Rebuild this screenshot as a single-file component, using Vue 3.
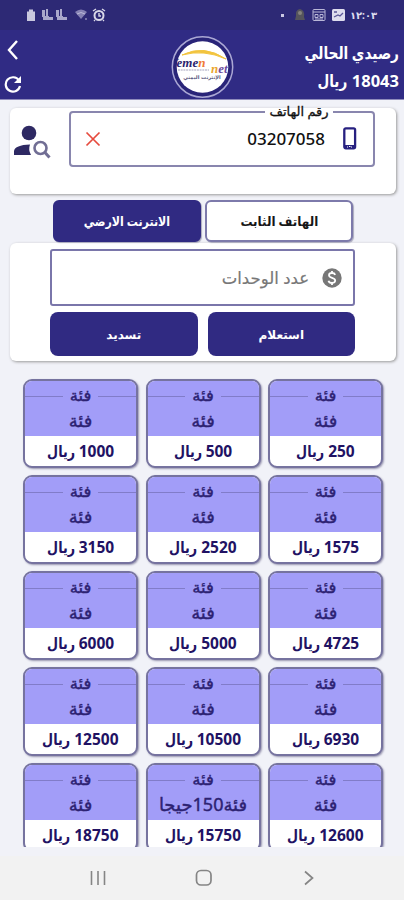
<template>
  <div class="phone" dir="rtl">
    <header class="top">
      <div class="status" dir="ltr">
        <div class="status-left">
          <svg width="10" height="14" viewBox="0 0 10 14"><path d="M3 1.500h4v2h2v9.500H1V3.500h2z" fill="#c9c8de" /></svg>
          <svg class="signals" width="28" height="14" viewBox="0 0 28 14" fill="#a9a7cb">
            <path d="M1 2h3v7H1zM5 1h2v8H5zM2 8h6v4H2zM8 9h4v3H8zM15 2h3v7h-3zM19 1h2v8h-2zM16 8h6v4h-6zM22 9h4v3h-4z" />
          </svg>
          <svg class="wifi" width="15" height="12" viewBox="0 0 15 12"><path d="M1 3q6-5 12 0L7 10z" fill="#8582b4" /><path d="M3 5q4-3 8 0M11 10h2" stroke="#bbb9d8" fill="none" /></svg>
          <svg class="alarm" width="14" height="14" viewBox="0 0 14 14" fill="none" stroke="#d8d7e8">
            <circle cx="7" cy="7.500" r="4.500" stroke-width="2" /><path d="M1 3l3-2M13 3l-3-2M7 5v3h2M3 12l-1 1M11 12l1 1" stroke-width="1.400" />
          </svg>
        </div>
        <div class="status-right">
          <i class="dot"></i>
          <svg width="12" height="14" viewBox="0 0 12 14"><path d="M6 1q5 1 4 8l1 3H1l1-4Q1 2 6 1z" fill="#55545c" /><circle cx="6" cy="5" r="2" fill="#85827c" /></svg>
          <svg width="14" height="14" viewBox="0 0 14 14" fill="none" stroke="#b9b7d7"><rect x="1" y="1.500" width="12" height="11" rx="1" /><path d="M1 4h12M3 6.500h3v3H3zM8 6.500h3v3H8zM3 11h8" /></svg>
          <svg width="13" height="12" viewBox="0 0 13 12"><rect width="13" height="12" rx="1.500" fill="#dedded" /><path d="M2 3h3M2 8l4-2 2 1 3-3" stroke="#5b5797" stroke-width="1.300" fill="none" /></svg>
          <span class="clock">١٢:٠٣</span>
        </div>
      </div>
      <div class="bar">
        <div class="balance">
          <div class="balance-title">رصيدي الحالي</div>
          <div class="balance-value">18043 <span class="rial">ريال</span></div>
        </div>
        <div class="logo">
          <svg width="64" height="64" viewBox="0 0 64 64">
            <defs><clipPath id="disc"><circle cx="32.500" cy="32" r="25.800" /></clipPath></defs>
            <circle cx="32.500" cy="32" r="30.200" fill="#292478" stroke="#aaa7d4" stroke-width="1.500" />
            <circle cx="32.500" cy="32" r="25.800" fill="#fff" />
            <g clip-path="url(#disc)" direction="ltr">
              <path d="M12 20Q34 9 56 24Q34 14 12 20z" fill="#f2c43f" stroke="#f2c43f" />
              <text x="0" y="32" class="logo-text" fill="#2b246e">Yeme<tspan fill="#ef7a38">n</tspan></text>
              <text x="41" y="38" class="logo-text" fill="#eba62f">n<tspan fill="#6d4d9f">et</tspan></text>
              <path d="M8 35h31" stroke="#a5a3bd" stroke-dasharray="2 .7" />
              <text x="32" y="44" class="logo-small" fill="#58547c" text-anchor="middle">الإنترنت اليمني</text>
            </g>
          </svg>
        </div>
        <div class="tools">
          <svg width="16" height="22" viewBox="0 0 16 22"><path d="M13 2L5 11l8 9" fill="none" stroke="#fff" stroke-width="2.400" /></svg>
          <svg class="reload" width="18" height="18" viewBox="0 0 18 18"><path d="M15 5.500A7.200 7.200 0 1 0 16 11" fill="none" stroke="#fff" stroke-width="2.200" /><path d="M17 1v7h-7z" fill="#fff" /></svg>
        </div>
      </div>
    </header>

    <main class="content">
      <section class="card phone-card">
        <fieldset class="phone-field">
          <legend>رقم الهاتف</legend>
          <div class="phone-row">
            <svg width="14" height="23" viewBox="0 0 14 23"><rect x="1.300" y="1.300" width="10.800" height="20" rx="1.500" fill="#fff" stroke="#272080" stroke-width="2.300" /><path d="M1 18h11v3H1z" fill="#272080" /><path d="M4 20h1M8 20h1M6 19.500h1.500" stroke="#fff" /></svg>
            <span class="number">03207058</span>
            <svg class="clear" width="16" height="16" viewBox="0 0 16 16"><path d="M1.500 1.500l13 13M14.500 1.500l-13 13" stroke="#e64b3e" stroke-width="1.700" /></svg>
          </div>
        </fieldset>
        <svg class="find-user" width="38" height="34" viewBox="0 0 38 34">
          <circle cx="15" cy="8" r="7.300" fill="#2e2963" />
          <path d="M0 30v-4q1-6 16-6.500Q14 25 17 30z" fill="#2e2963" />
          <circle cx="26.500" cy="23" r="6" fill="#fff" stroke="#716e94" stroke-width="2.600" />
          <path d="M30.500 27l5 5.500" stroke="#716e94" stroke-width="3" />
        </svg>
      </section>

      <nav class="tabs">
        <button class="tab"><span>الهاتف الثابت</span></button>
        <button class="tab active"><span>الانترنت الارضي</span></button>
      </nav>

      <section class="card pay-card">
        <div class="units">
          <svg width="20" height="20" viewBox="0 0 20 20"><circle cx="10" cy="10" r="9.700" fill="#777" /><path d="M13.200 6.800Q12.500 5 10 5 7 5 7 7.300c0 3.300 6.200 1.800 6.200 5.200Q13 15 10 15q-3 0-3.500-2.300M10 3v2M10 15v2" fill="none" stroke="#fff" stroke-width="1.800" /></svg>
          <span>عدد الوحدات</span>
        </div>
        <div class="actions">
          <button class="action">استعلام</button>
          <button class="action">تسديد</button>
        </div>
      </section>

      <section class="tiles">
        <div v-for="tile in tiles" :key="tile.price" class="tile">
          <div class="tile-head">
            <div class="tile-legend"><span>فئة</span></div>
            <div class="tile-name">{{ tile.name }}</div>
          </div>
          <div class="tile-price">{{ tile.price }} <span class="rial">ريال</span></div>
        </div>
      </section>
    </main>

    <footer class="nav" dir="ltr">
      <svg width="16" height="16" viewBox="0 0 16 16"><path d="M1.500 1v14M8 1v14M14.500 1v14" stroke="#858585" stroke-width="1.600" /></svg>
      <svg width="18" height="18" viewBox="0 0 18 18"><rect x="1.500" y="1.500" width="14.500" height="14.500" rx="4.500" fill="none" stroke="#858585" stroke-width="1.700" /></svg>
      <svg width="16" height="16" viewBox="0 0 16 16"><path d="M4 1.500l7.500 6.500L4 14.500" fill="none" stroke="#858585" stroke-width="1.700" /></svg>
    </footer>
  </div>
</template>

<script setup>
const prices = [
  250, 500, 1000,
  1575, 2520, 3150,
  4725, 5000, 6000,
  6930, 10500, 12500,
  12600, 15750, 18750,
]

const tiles = prices.map(price => ({
  price,
  name: price === 15750 ? 'فئة150جيجا' : 'فئة',
}))
</script>

<style>
body {
  margin: 0;
}
</style>

<style scoped>
.phone {
  width: 404px;
  height: 900px;
  display: flex;
  flex-direction: column;
  overflow: hidden;
  background: #f1f2f8;
  color: #111;
  font-family: "Noto Sans", "DejaVu Sans", sans-serif;
}

svg {
  display: block;
  flex: none;
}

button {
  font-family: inherit;
  padding: 0;
  margin: 0;
}

.top {
  height: 100px;
  flex: none;
  background: #302b84;
  border-bottom: 1px solid #8e8bbb;
  box-sizing: border-box;
  color: #fff;
}

.status {
  height: 30px;
  background: #2d2975;
  display: flex;
  justify-content: space-between;
  box-sizing: border-box;
  padding: 0 28px 0 26px;
}

.status-left,
.status-right {
  display: flex;
  align-items: center;
}

.signals { margin-left: 5px; }
.wifi { margin-left: 5px; }
.alarm { margin-left: 3px; }

.status-right {
  gap: 6px;
}

.dot {
  width: 3px;
  height: 3px;
  background: #c9c8e3;
  margin-right: 4px;
}

.clock {
  font-size: 10px;
  line-height: 14px;
  width: 25px;
  display: flex;
  justify-content: center;
  white-space: nowrap;
  font-weight: bold;
  color: #dddcee;
}

.bar {
  height: 69px;
  display: grid;
  grid-template-columns: 1fr 64px 1fr;
}

.balance {
  padding: 9px 5px 0 0;
  font-weight: bold;
  white-space: nowrap;
}

.balance-title {
  font-size: 16.500px;
  line-height: 28px;
  transform: scaleX(0.83);
  transform-origin: right;
}

.balance-value {
  font-size: 16.500px;
  line-height: 28px;
}

/* the word sits tighter than the digits */
.rial {
  display: inline-block;
  transform: scaleX(0.82);
  transform-origin: right;
  margin-left: -0.4em;
}

.logo {
  padding-top: 5px;
}

.logo-text {
  font: italic bold 13px "Liberation Serif", serif;
}

.logo-small {
  font: bold 5px "DejaVu Sans", sans-serif;
}

.tools {
  direction: ltr;
  padding: 9px 0 0 4px;
}

.reload {
  margin-top: 14px;
}

.content {
  height: 747px;
  flex: none;
  overflow: hidden;
}

.card {
  width: 386px;
  margin: 0 8px 0 10px;
  box-sizing: border-box;
  background: #fff;
  border-radius: 6px;
  box-shadow: 1px 1px 3px #999;
}

.phone-card {
  height: 86px;
  margin-top: 8px;
  display: flex;
  padding: 0 21px 0 4px;
  justify-content: space-between;
}

.phone-field {
  box-sizing: border-box;
  width: 306px;
  height: 64px;
  margin: -5px 0 0;
  padding: 0 16px;
  border: 2px solid #8986ae;
  border-radius: 4px;
  min-width: 0;
}

.phone-field legend {
  width: 68px;
  height: 17px;
  margin-right: 24px;
  padding: 0;
  font-size: 13px;
  line-height: 17px;
  display: flex;
  justify-content: center;
  white-space: nowrap;
  -webkit-text-stroke: 0.300px;
}

.phone-row {
  display: flex;
  align-items: center;
  height: 23px;
  margin-top: 7px;
}

.number {
  font-size: 17px;
  line-height: 22px;
  font-weight: 500;
  margin-right: 18px;
}

.clear {
  margin-right: auto;
  margin-left: -2px;
}

.find-user {
  margin-top: 17px;
}

.tabs {
  display: flex;
  gap: 4px;
  height: 42px;
  margin: 6px 51px 0 53px;
}

.tab {
  flex: 1;
  border: 2px solid #7d7aab;
  border-radius: 6px;
  background: #fff;
  color: #171717;
  font-size: 13px;
  font-weight: bold;
  box-shadow: 1px 1px 1px #aaaabd;
}

.tab span {
  display: inline-block;
  transform: scaleX(0.92);
}

.tab.active {
  background: #302a82;
  border-color: #302a82;
  color: #fff;
}

.tab.active span {
  transform: scaleX(0.85);
}

.pay-card {
  height: 118px;
  margin-top: 1px;
  padding: 6px 41px 0 40px;
}

.units {
  height: 57px;
  box-sizing: border-box;
  border: 2px solid #7a76aa;
  border-radius: 3px;
  display: flex;
  align-items: center;
  padding-right: 11px;
  gap: 13px;
  color: #777;
  font-size: 16.500px;
  -webkit-text-stroke: 0.200px;
}

.actions {
  display: flex;
  gap: 10px;
  height: 44px;
  margin-top: 6px;
}

.action {
  flex: 1;
  border: 0;
  border-radius: 8px;
  background: #302a82;
  color: #fff;
  font-size: 12px;
  font-weight: bold;
}

.tiles {
  display: grid;
  grid-template-columns: repeat(3, 115px);
  grid-auto-rows: 89px;
  gap: 7.100px 7.500px;
  margin: 18px 21px 0 23px;
}

.tile {
  box-sizing: border-box;
  border: 2px solid #76739f;
  border-radius: 9px;
  overflow: hidden;
  background: #fff;
  box-shadow: 1px 1px 2px #9896b0;
  color: #211263;
  text-align: center;
  white-space: nowrap;
}

.tile-head {
  height: 55px;
  background: #a29df8;
  color: #2d2272;
  -webkit-text-stroke: 0.400px;
}

.tile-legend {
  display: flex;
  align-items: center;
  gap: 7px;
  height: 30px;
  font-size: 16.500px;
}

.tile-legend span {
  margin-top: -3px;
}

.tile-legend::before,
.tile-legend::after {
  content: "";
  flex: 1;
  height: 1px;
  background: #817cc9;
}

.tile-name {
  height: 22px;
  line-height: 19px;
  font-size: 18px;
}

.tile-price {
  height: 30px;
  line-height: 30px;
  font-size: 15.500px;
  font-weight: bold;
}

.nav {
  flex: 1;
  display: flex;
  align-items: center;
  justify-content: space-between;
  margin-top: 9px;
  padding: 0 87px 0 90px;
  background: #f2f2f2;
}
</style>
